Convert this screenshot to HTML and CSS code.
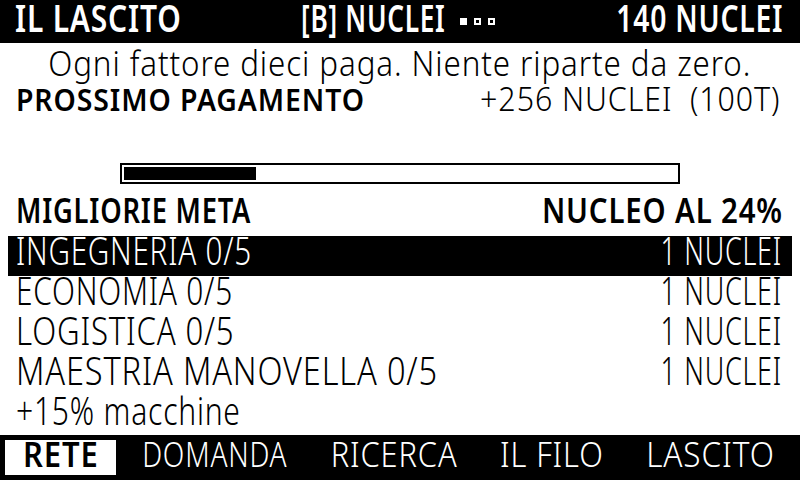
FILE: index.html
```html
<!DOCTYPE html>
<html lang="it">
<head>
<meta charset="utf-8">
<title>Il Lascito</title>
<link rel="stylesheet" href="styles.css">
</head>
<body>
<div class="screen">
  <header class="top">
    <span class="tx hl">IL LASCITO</span>
    <span class="hc"><span class="tx hcx">[B] NUCLEI</span><span class="dots"><i class="sq on"></i><i class="sq"></i><i class="sq"></i></span></span>
    <span class="tx hr">140 NUCLEI</span>
  </header>
  <p class="sub"><span class="tx subx">Ogni fattore dieci paga. Niente riparte da zero.</span></p>
  <div class="next"><span class="tx nextl">PROSSIMO PAGAMENTO</span><span class="tx nextr">+256 NUCLEI  (100T)</span></div>
  <div class="bar"><div class="fill" style="width:24%"></div></div>
  <div class="sect"><span class="tx sectl">MIGLIORIE META</span><span class="tx sectr">NUCLEO AL 24%</span></div>
  <ul class="list">
    <li class="row sel"><span class="tx r1">INGEGNERIA 0/5</span><span class="tx cost">1 NUCLEI</span></li>
    <li class="row"><span class="tx r2">ECONOMIA 0/5</span><span class="tx cost">1 NUCLEI</span></li>
    <li class="row"><span class="tx r3">LOGISTICA 0/5</span><span class="tx cost">1 NUCLEI</span></li>
    <li class="row"><span class="tx r4">MAESTRIA MANOVELLA 0/5</span><span class="tx cost">1 NUCLEI</span></li>
  </ul>
  <div class="note"><span class="tx notex">+15% macchine</span></div>
  <nav class="tabs">
    <span class="tab active"><span class="tx t1">RETE</span></span>
    <span class="tab"><span class="tx t2">DOMANDA</span></span>
    <span class="tab"><span class="tx t3">RICERCA</span></span>
    <span class="tab"><span class="tx t4">IL FILO</span></span>
    <span class="tab"><span class="tx t5">LASCITO</span></span>
  </nav>
</div>
</body>
</html>
```
FILE: styles.css
```css
html, body {
  margin: 0;
  padding: 0;
  background: #fff;
}
.screen {
  width: 800px;
  height: 480px;
  overflow: hidden;
  display: flex;
  flex-direction: column;
  background: #fff;
  color: #000;
  font-family: "Noto Sans", "DejaVu Sans", sans-serif;
  font-weight: 300;
  font-size: 38px;
  letter-spacing: 1px;
}
/* condensed LCD-style lettering */
.tx {
  display: inline-block;
  white-space: pre;
  transform-origin: left center;
  transform: scaleX(var(--sx, 0.8));
}

/* header */
.top {
  height: 43px;
  flex: none;
  background: #000;
  color: #fff;
  display: flex;
  align-items: flex-start;
  padding: 0 17px 0 15px;
  font-weight: 600;
  font-size: 37px;
  line-height: 35px;
}
.hl { --sx: 0.81; }
.hc {
  display: flex;
  align-items: flex-start;
  margin-left: 21px;
}
.hcx { --sx: 0.71; transform-origin: right center; }
.hr { --sx: 0.765; margin-left: auto; transform-origin: right center; }
.dots {
  display: flex;
  gap: 7px;
  margin: 18px 0 0 15px;
}
.sq {
  width: 7px;
  height: 7px;
  box-sizing: border-box;
  border: 2px solid #fff;
}
.sq.on { background: #fff; }

/* subtitle */
.sub {
  margin: 0;
  height: 39px;
  flex: none;
  text-align: center;
  font-size: 35px;
  line-height: 39px;
  white-space: nowrap;
}
.subx { --sx: 0.895; transform-origin: center center; }

/* next payment */
.next {
  height: 34px;
  flex: none;
  display: flex;
  justify-content: space-between;
  align-items: baseline;
  padding: 0 20px 0 16px;
  line-height: 34px;
}
.nextl { --sx: 0.915; font-weight: 600; font-size: 31px; }
.nextr { --sx: 0.92; font-size: 33px; transform-origin: right center; }

/* progress */
.bar {
  flex: none;
  width: 560px;
  height: 21px;
  box-sizing: border-box;
  margin: 47px auto 0;
  border: 2px solid #000;
  padding: 2px;
}
.fill { height: 100%; background: #000; }

/* section heading */
.sect {
  height: 52px;
  flex: none;
  display: flex;
  justify-content: space-between;
  padding: 0 17px 0 16px;
  font-weight: 600;
  font-size: 35px;
  line-height: 52px;
}
.sectl { --sx: 0.78; }
.sectr { --sx: 0.84; transform-origin: right center; }

/* upgrade list */
.list {
  list-style: none;
  margin: 0;
  padding: 0;
  flex: none;
}
.row {
  height: 40px;
  margin: 0 8px;
  padding: 0 10px 0 8px;
  display: flex;
  justify-content: space-between;
  align-items: flex-start;
  line-height: 29px;
}
.row.sel { background: #000; color: #fff; }
.r1 { --sx: 0.78; }
.r2 { --sx: 0.785; }
.r3 { --sx: 0.82; }
.r4 { --sx: 0.857; }
.cost { --sx: 0.71; transform-origin: right center; }

.note {
  height: 39px;
  flex: none;
  padding-left: 16px;
  line-height: 29px;
}
.notex { --sx: 0.79; }

/* bottom tabs */
.tabs {
  height: 45px;
  flex: none;
  box-sizing: border-box;
  background: #000;
  color: #fff;
  display: grid;
  grid-template-columns: 111px 181px 160px 138px 162px;
  justify-content: space-between;
  align-items: start;
  padding: 5px 9px 0 5px;
  font-size: 35px;
}
.tab {
  height: 35px;
  box-sizing: border-box;
  display: flex;
  justify-content: center;
  line-height: 27px;
  padding-bottom: 8px;
}
.tab .tx { transform-origin: center center; }
.tab.active {
  background: #fff;
  color: #000;
  font-weight: 600;
}
.t1 { --sx: 0.885; }
.t2 { --sx: 0.8; }
.t3 { --sx: 0.88; }
.t4 { --sx: 0.88; }
.t5 { --sx: 0.9; }
```
